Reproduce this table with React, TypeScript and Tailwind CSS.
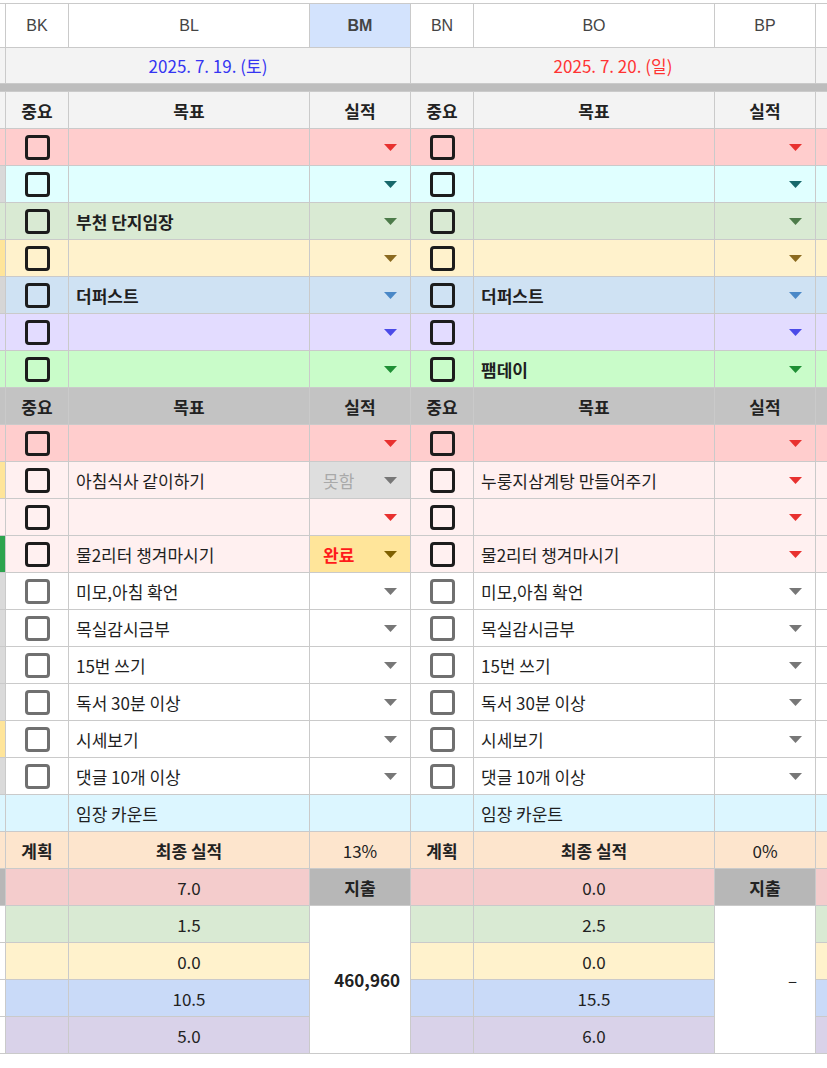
import React from 'react';
import clsx from 'clsx';

type Row = {
  bg: string;
  edgeL: string;
  edgeR: string;
  arrowL: string;
  arrowR: string;
  left: string;
  right: string;
  bold?: boolean;
  box: 'dark' | 'gray';
  status?: 'fail' | 'done';
};

const topRows: Row[] = [
  { bg: 'bg-[#ffcdcd]', edgeL: 'bg-[#ffcdcd]', edgeR: 'bg-[#ffcdcd]', arrowL: '#e8312f', arrowR: '#e8312f', left: '', right: '', bold: true, box: 'dark' },
  { bg: 'bg-[#e0ffff]', edgeL: 'bg-[#d9d9d9]', edgeR: 'bg-[#e0ffff]', arrowL: '#17686b', arrowR: '#17686b', left: '', right: '', bold: true, box: 'dark' },
  { bg: 'bg-[#d9ead3]', edgeL: 'bg-[#d9ead3]', edgeR: 'bg-[#d9ead3]', arrowL: '#4d7b4a', arrowR: '#4d7b4a', left: '부천 단지임장', right: '', bold: true, box: 'dark' },
  { bg: 'bg-[#fff2cc]', edgeL: 'bg-[#ffe59a]', edgeR: 'bg-[#fff2cc]', arrowL: '#8b6a1f', arrowR: '#8b6a1f', left: '', right: '', bold: true, box: 'dark' },
  { bg: 'bg-[#cfe2f3]', edgeL: 'bg-[#d6d6d6]', edgeR: 'bg-[#cfe2f3]', arrowL: '#4a88c7', arrowR: '#4a88c7', left: '더퍼스트', right: '더퍼스트', bold: true, box: 'dark' },
  { bg: 'bg-[#e3dcff]', edgeL: 'bg-[#e3dcff]', edgeR: 'bg-[#e3dcff]', arrowL: '#4b4be8', arrowR: '#4b4be8', left: '', right: '', bold: true, box: 'dark' },
  { bg: 'bg-[#c9fcc9]', edgeL: 'bg-[#c9fcc9]', edgeR: 'bg-[#c9fcc9]', arrowL: '#1f8f35', arrowR: '#1f8f35', left: '', right: '팸데이', bold: true, box: 'dark' },
];

const dailyRows: Row[] = [
  { bg: 'bg-[#ffcdcd]', edgeL: 'bg-[#ffcdcd]', edgeR: 'bg-[#ffcdcd]', arrowL: '#e8312f', arrowR: '#e8312f', left: '', right: '', box: 'dark' },
  { bg: 'bg-[#fff0f0]', edgeL: 'bg-[#ffe59a]', edgeR: 'bg-[#fff0f0]', arrowL: '#777777', arrowR: '#e8312f', left: '아침식사 같이하기', right: '누룽지삼계탕 만들어주기', box: 'dark', status: 'fail' },
  { bg: 'bg-[#fff0f0]', edgeL: 'bg-[#fff0f0]', edgeR: 'bg-[#fff0f0]', arrowL: '#e8312f', arrowR: '#e8312f', left: '', right: '', box: 'dark' },
  { bg: 'bg-[#fff0f0]', edgeL: 'bg-[#2da44e]', edgeR: 'bg-[#fff0f0]', arrowL: '#7f6000', arrowR: '#e8312f', left: '물2리터 챙겨마시기', right: '물2리터 챙겨마시기', box: 'dark', status: 'done' },
  { bg: 'bg-white', edgeL: 'bg-[#dadada]', edgeR: 'bg-white', arrowL: '#777777', arrowR: '#777777', left: '미모,아침 확언', right: '미모,아침 확언', box: 'gray' },
  { bg: 'bg-white', edgeL: 'bg-[#dadada]', edgeR: 'bg-white', arrowL: '#777777', arrowR: '#777777', left: '목실감시금부', right: '목실감시금부', box: 'gray' },
  { bg: 'bg-white', edgeL: 'bg-[#dadada]', edgeR: 'bg-white', arrowL: '#777777', arrowR: '#777777', left: '15번 쓰기', right: '15번 쓰기', box: 'gray' },
  { bg: 'bg-white', edgeL: 'bg-[#dadada]', edgeR: 'bg-white', arrowL: '#777777', arrowR: '#777777', left: '독서 30분 이상', right: '독서 30분 이상', box: 'gray' },
  { bg: 'bg-white', edgeL: 'bg-[#ffe59a]', edgeR: 'bg-white', arrowL: '#777777', arrowR: '#777777', left: '시세보기', right: '시세보기', box: 'gray' },
  { bg: 'bg-white', edgeL: 'bg-[#dadada]', edgeR: 'bg-white', arrowL: '#777777', arrowR: '#777777', left: '댓글 10개 이상', right: '댓글 10개 이상', box: 'gray' },
];

const scoreRows = [
  { bg: 'bg-[#d9ead3]', left: '1.5', right: '2.5' },
  { bg: 'bg-[#fff2cc]', left: '0.0', right: '0.0' },
  { bg: 'bg-[#c9daf8]', left: '10.5', right: '15.5' },
  { bg: 'bg-[#d9d2e9]', left: '5.0', right: '6.0' },
];

function Arrow({ color }: { color: string }) {
  return (
    <svg width="13" height="7" viewBox="0 0 13 7" className="shrink-0">
      <polygon points="0,0 13,0 6.5,7" fill={color} />
    </svg>
  );
}

function Box({ tone }: { tone: 'dark' | 'gray' }) {
  return (
    <div
      className={clsx(
        'w-[25px] h-[25px] rounded-[4px] border-[3px]',
        tone === 'dark' ? 'border-[#1c1c1c]' : 'border-[#707070]'
      )}
    />
  );
}

function Status({ row, side }: { row: Row; side: 'l' | 'r' }) {
  const st = side === 'l' ? row.status : undefined;
  return (
    <div
      className={clsx(
        'h-[36px] flex items-center justify-between pl-[13px] pr-[13px]',
        st === 'fail' ? 'bg-[#dedede]' : st === 'done' ? 'bg-[#ffe59a]' : row.bg
      )}
    >
      <span
        className={clsx(
          'text-[17px]',
          st === 'fail' && 'text-[#a9a9a9]',
          st === 'done' && 'text-[#ff1a1a] font-bold'
        )}
      >
        {st === 'fail' ? '못함' : st === 'done' ? '완료' : ''}
      </span>
      <Arrow color={side === 'l' ? row.arrowL : row.arrowR} />
    </div>
  );
}

function TaskRow({ row }: { row: Row }) {
  return (
    <>
      <div className={clsx('h-[36px]', row.edgeL)} />
      <div className={clsx('h-[36px] flex items-center justify-center', row.bg)}>
        <Box tone={row.box} />
      </div>
      <div className={clsx('h-[36px] flex items-center pl-[7px] text-[17px] text-[#1f1f1f]', row.bg, row.bold && 'font-bold')}>
        {row.left}
      </div>
      <Status row={row} side="l" />
      <div className={clsx('h-[36px] flex items-center justify-center', row.bg)}>
        <Box tone={row.box} />
      </div>
      <div className={clsx('h-[36px] flex items-center pl-[7px] text-[17px] text-[#1f1f1f]', row.bg, row.bold && 'font-bold')}>
        {row.right}
      </div>
      <Status row={row} side="r" />
      <div className={clsx('h-[36px]', row.edgeR)} />
    </>
  );
}

function HeadRow({ bg, edge }: { bg: string; edge: string }) {
  const cell = clsx('h-[36px] flex items-center justify-center text-[17px] font-bold text-[#222]', bg);
  return (
    <>
      <div className={clsx('h-[36px]', edge)} />
      <div className={cell}>중요</div>
      <div className={cell}>목표</div>
      <div className={cell}>실적</div>
      <div className={cell}>중요</div>
      <div className={cell}>목표</div>
      <div className={cell}>실적</div>
      <div className={clsx('h-[36px]', bg)} />
    </>
  );
}

export default function App() {
  const letter = "h-[43px] flex items-center justify-center font-['Liberation_Sans',sans-serif] text-[16px] text-[#444]";
  const center = 'h-[36px] flex items-center justify-center text-[17px] text-[#222]';

  return (
    <div className="w-[827px] min-h-[1068px] bg-white pt-[3px] font-['Noto_Sans_CJK_KR',sans-serif] leading-none">
      <div className="grid grid-cols-[5px_62px_240px_100px_62px_240px_100px_11px] gap-px bg-[#cacaca] border-y border-[#cacaca]">
        {/* column letters */}
        <div className="h-[43px] bg-white" />
        <div className={clsx(letter, 'bg-white')}>BK</div>
        <div className={clsx(letter, 'bg-white')}>BL</div>
        <div className={clsx(letter, 'bg-[#d3e3fd] text-[#1f1f1f] font-bold')}>BM</div>
        <div className={clsx(letter, 'bg-white')}>BN</div>
        <div className={clsx(letter, 'bg-white')}>BO</div>
        <div className={clsx(letter, 'bg-white')}>BP</div>
        <div className="h-[43px] bg-white" />

        {/* dates */}
        <div className="h-[35px] bg-[#f3f3f3]" />
        <div className="col-span-3 h-[35px] flex items-center justify-center bg-[#f3f3f3] text-[17px] text-[#3535f2]">
          2025. 7. 19. (토)
        </div>
        <div className="col-span-3 h-[35px] flex items-center justify-center bg-[#f3f3f3] text-[17px] text-[#ff3333]">
          2025. 7. 20. (일)
        </div>
        <div className="h-[35px] bg-[#f3f3f3]" />

        <div className="col-span-8 h-[7px] bg-[#bdbdbd]" />

        <HeadRow bg="bg-[#f3f3f3]" edge="bg-[#f3f3f3]" />
        {topRows.map((r, i) => (
          <TaskRow key={'t' + i} row={r} />
        ))}

        <HeadRow bg="bg-[#c3c3c3]" edge="bg-[#c3c3c3]" />
        {dailyRows.map((r, i) => (
          <TaskRow key={'d' + i} row={r} />
        ))}

        {/* 임장 카운트 */}
        <div className="h-[36px] bg-[#dcf6ff]" />
        <div className="h-[36px] bg-[#dcf6ff]" />
        <div className="h-[36px] flex items-center pl-[7px] text-[17px] text-[#1f1f1f] bg-[#dcf6ff]">임장 카운트</div>
        <div className="h-[36px] bg-[#dcf6ff]" />
        <div className="h-[36px] bg-[#dcf6ff]" />
        <div className="h-[36px] flex items-center pl-[7px] text-[17px] text-[#1f1f1f] bg-[#dcf6ff]">임장 카운트</div>
        <div className="h-[36px] bg-[#dcf6ff]" />
        <div className="h-[36px] bg-[#dcf6ff]" />

        {/* 계획 / 최종 실적 */}
        <div className="h-[36px] bg-[#fde5cd]" />
        <div className={clsx(center, 'bg-[#fde5cd] font-bold')}>계획</div>
        <div className={clsx(center, 'bg-[#fde5cd] font-bold')}>최종 실적</div>
        <div className={clsx(center, 'bg-[#fde5cd]')}>13%</div>
        <div className={clsx(center, 'bg-[#fde5cd] font-bold')}>계획</div>
        <div className={clsx(center, 'bg-[#fde5cd] font-bold')}>최종 실적</div>
        <div className={clsx(center, 'bg-[#fde5cd]')}>0%</div>
        <div className="h-[36px] bg-[#fde5cd]" />

        {/* 지출 */}
        <div className="h-[36px] bg-[#b7b7b7]" />
        <div className="h-[36px] bg-[#f4cccc]" />
        <div className={clsx(center, 'bg-[#f4cccc]')}>7.0</div>
        <div className={clsx(center, 'bg-[#b7b7b7] font-bold')}>지출</div>
        <div className="h-[36px] bg-[#f4cccc]" />
        <div className={clsx(center, 'bg-[#f4cccc]')}>0.0</div>
        <div className={clsx(center, 'bg-[#b7b7b7] font-bold')}>지출</div>
        <div className="h-[36px] bg-[#f4cccc]" />

        {scoreRows.map((r, i) => (
          <React.Fragment key={'s' + i}>
            <div className="h-[36px] bg-white" />
            <div className={clsx('h-[36px]', r.bg)} />
            <div className={clsx(center, r.bg)}>{r.left}</div>
            {i === 0 && (
              <div className="row-span-4 bg-white flex items-center justify-end pr-[10px] text-[17px] font-semibold text-[#222]">
                460,960
              </div>
            )}
            <div className={clsx('h-[36px]', r.bg)} />
            <div className={clsx(center, r.bg)}>{r.right}</div>
            {i === 0 && (
              <div className="row-span-4 bg-white flex items-center justify-end pr-[18px] text-[17px] text-[#222]">
                –
              </div>
            )}
            <div className={clsx('h-[36px]', r.bg)} />
          </React.Fragment>
        ))}
      </div>
    </div>
  );
}
